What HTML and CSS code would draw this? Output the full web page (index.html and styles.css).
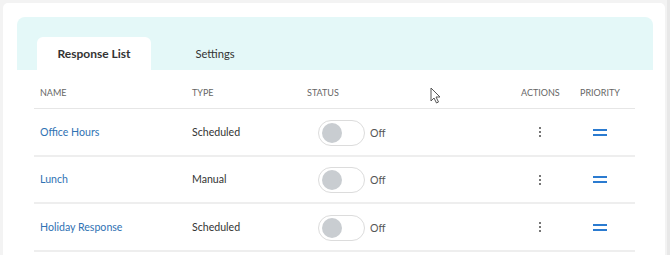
FILE: index.html
```html
<!DOCTYPE html>
<html>
<head>
<meta charset="utf-8">
<link rel="stylesheet" href="styles.css">
</head>
<body>
<div class="card">
  <div class="tabbar">
    <div class="tab active">Response List</div>
    <div class="tab">Settings</div>
  </div>
  <div class="table">
    <div class="row head">
      <div>NAME</div>
      <div>TYPE</div>
      <div>STATUS</div>
      <div>ACTIONS</div>
      <div>PRIORITY</div>
    </div>
    <div class="row">
      <div class="name">Office Hours</div>
      <div>Scheduled</div>
      <div class="status"><span class="toggle"><span class="knob"></span></span><span class="off">Off</span></div>
      <div class="actions"><span class="dots"><i></i><i></i><i></i></span></div>
      <div class="prio"><span class="bars"></span></div>
    </div>
    <div class="row">
      <div class="name">Lunch</div>
      <div>Manual</div>
      <div class="status"><span class="toggle"><span class="knob"></span></span><span class="off">Off</span></div>
      <div class="actions"><span class="dots"><i></i><i></i><i></i></span></div>
      <div class="prio"><span class="bars"></span></div>
    </div>
    <div class="row">
      <div class="name">Holiday Response</div>
      <div>Scheduled</div>
      <div class="status"><span class="toggle"><span class="knob"></span></span><span class="off">Off</span></div>
      <div class="actions"><span class="dots"><i></i><i></i><i></i></span></div>
      <div class="prio"><span class="bars"></span></div>
    </div>
  </div>
</div>
<svg class="cursor" width="12" height="18" viewBox="0 0 12 18"><path d="M1 1 L1 14 L4 11 L6.5 16 L8.5 15 L6 10 L10 10 Z" fill="#fff" stroke="#555" stroke-width="1"/></svg>
<div class="scroll"></div>
</body>
</html>
```
FILE: styles.css
```css
* { box-sizing: border-box; }
html, body { margin: 0; padding: 0; }
body {
  width: 670px;
  height: 255px;
  overflow: hidden;
  background: #f3f3f3;
  font-family: Lato, "Open Sans", sans-serif;
  color: #333;
  position: relative;
}
.card {
  margin: 3px 0 0 3px;
  width: 662px;
  height: 252px;
  overflow: hidden;
  background: #fff;
  border-radius: 5px 5px 0 0;
  padding: 14px 12px 0 14px;
}
.tabbar {
  height: 53px;
  background: #e4f8f8;
  border-radius: 8px 8px 0 0;
  display: flex;
  align-items: flex-end;
  padding-left: 20px;
}
.tab {
  height: 33px;
  width: 114px;
  display: flex;
  align-items: center;
  justify-content: center;
  font-size: 11.2px;
  color: #333;
  padding-bottom: 1px;
}
.tab + .tab { margin-left: 7px; }
.tab.active {
  background: #fff;
  border-radius: 6px 6px 0 0;
  font-weight: 700;
  font-size: 12px;
}
.table {
  margin: 0 18px 0 17px;
}
.row {
  display: grid;
  grid-template-columns: 152px 115px 214px 59px 1fr;
  padding-left: 6px;
  align-items: center;
  height: 47.5px;
  border-bottom: 2px solid #eeeeee;
  font-size: 10.6px;
  color: #333;
}
.row.head {
  height: 39px;
  border-bottom: 1px solid #e6e6e6;
  font-size: 9px;
  color: #666;
  padding-top: 6px;
}
.name { color: #2f72b3; }
.status { display: flex; align-items: center; padding-left: 11px; padding-top: 2px; }
.toggle {
  width: 47px;
  height: 26px;
  border: 1px solid #dcdcdc;
  border-radius: 13px;
  background: #fff;
  display: flex;
  align-items: center;
  padding-left: 3px;
}
.knob {
  width: 20px;
  height: 20px;
  border-radius: 50%;
  background: #c9cdd1;
}
.off { margin-left: 5px; color: #555; font-size: 10.6px; }
.actions { padding-left: 18px; display: flex; padding-top: 1px; }
.dots { display: flex; flex-direction: column; gap: 2px; }
.dots i { width: 2px; height: 2px; background: #777; display: block; }
.prio { padding-left: 13px; display: flex; padding-top: 1px; }
.bars {
  width: 14px;
  height: 7px;
  border-top: 2px solid #2b7bd0;
  border-bottom: 2px solid #2b7bd0;
}
.cursor { position: absolute; left: 430px; top: 87px; }
.scroll {
  position: absolute;
  right: 0; top: 0;
  width: 3px; height: 255px;
  background: #e8e8e8;
}
```
